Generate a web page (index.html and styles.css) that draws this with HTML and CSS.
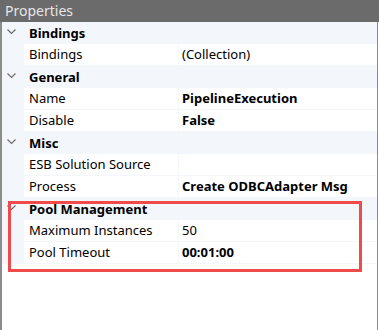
FILE: index.html
```html
<!DOCTYPE html>
<html>
<head>
<meta charset="utf-8">
<link rel="stylesheet" href="styles.css">
</head>
<body>
<div class="panel">
  <div class="title">Properties</div>
  <div class="body">
    <div class="grid">
      <div class="cat"><span class="chev"><svg width="9" height="6" viewBox="0 0 9 6"><polyline points="0.5,0.5 4.5,4.5 8.5,0.5" fill="none" stroke="#6e6e6e" stroke-width="1.2"/></svg></span><span class="cat-name">Bindings</span></div>
      <div class="row"><span class="gut"></span><span class="name">Bindings</span><span class="val">(Collection)</span></div>
      <div class="cat"><span class="chev"><svg width="9" height="6" viewBox="0 0 9 6"><polyline points="0.5,0.5 4.5,4.5 8.5,0.5" fill="none" stroke="#6e6e6e" stroke-width="1.2"/></svg></span><span class="cat-name">General</span></div>
      <div class="row"><span class="gut"></span><span class="name">Name</span><span class="val bold">PipelineExecution</span></div>
      <div class="row"><span class="gut"></span><span class="name">Disable</span><span class="val bold">False</span></div>
      <div class="cat"><span class="chev"><svg width="9" height="6" viewBox="0 0 9 6"><polyline points="0.5,0.5 4.5,4.5 8.5,0.5" fill="none" stroke="#6e6e6e" stroke-width="1.2"/></svg></span><span class="cat-name">Misc</span></div>
      <div class="row"><span class="gut"></span><span class="name">ESB Solution Source</span><span class="val"></span></div>
      <div class="row"><span class="gut"></span><span class="name">Process</span><span class="val bold">Create ODBCAdapter Msg</span></div>
      <div class="cat"><span class="chev"><svg width="9" height="6" viewBox="0 0 9 6"><polyline points="0.5,0.5 4.5,4.5 8.5,0.5" fill="none" stroke="#6e6e6e" stroke-width="1.2"/></svg></span><span class="cat-name">Pool Management</span></div>
      <div class="row"><span class="gut"></span><span class="name">Maximum Instances</span><span class="val">50</span></div>
      <div class="row"><span class="gut"></span><span class="name">Pool Timeout</span><span class="val bold">00:01:00</span></div>
    </div>
  </div>
  <div class="highlight"></div>
</div>
</body>
</html>
```

FILE: styles.css
```css
html, body {
  margin: 0;
  padding: 0;
  background: #ffffff;
}
body {
  width: 379px;
  height: 330px;
  overflow: hidden;
  font-family: "Noto Sans", "Open Sans", sans-serif;
  font-size: 13px;
  color: #000;
}
.panel {
  position: relative;
  width: 379px;
  height: 330px;
  display: flex;
  flex-direction: column;
}
.title {
  height: 22px;
  background: #6b6b6b;
  color: #e6e6e6;
  font-size: 14px;
  line-height: 22px;
  padding-left: 5px;
  box-sizing: border-box;
  flex: none;
}
.body {
  flex: 1;
  width: 378px;
  box-sizing: border-box;
  border-left: 2px solid #8c8c8c;
  border-right: 1px solid #8c8c8c;
  background: #ffffff;
}
.grid {
  display: flex;
  flex-direction: column;
}
.cat {
  height: 22px;
  background: #f3f6fb;
  display: flex;
  align-items: center;
}
.chev {
  width: 27px;
  display: flex;
  justify-content: flex-start;
  padding-left: 5px;
  box-sizing: border-box;
  margin-top: -2px;
}
.chev svg { display: block; }
.cat-name {
  font-weight: bold;
}
.row {
  height: 22px;
  display: flex;
  background: #f3f6fb;
}
.gut {
  width: 22px;
  flex: none;
}
.name {
  width: 154px;
  flex: none;
  background: #fff;
  height: 21px;
  line-height: 21px;
  padding-left: 5px;
  box-sizing: border-box;
  margin-right: 1px;
  white-space: nowrap;
}
.val {
  flex: 1;
  background: #fff;
  height: 21px;
  line-height: 21px;
  padding-left: 3px;
  white-space: nowrap;
}
.bold { font-weight: bold; }
.highlight {
  position: absolute;
  left: 8px;
  top: 201px;
  width: 354px;
  height: 71px;
  box-sizing: border-box;
  border: 3px solid #ef4b4b;
}
```
